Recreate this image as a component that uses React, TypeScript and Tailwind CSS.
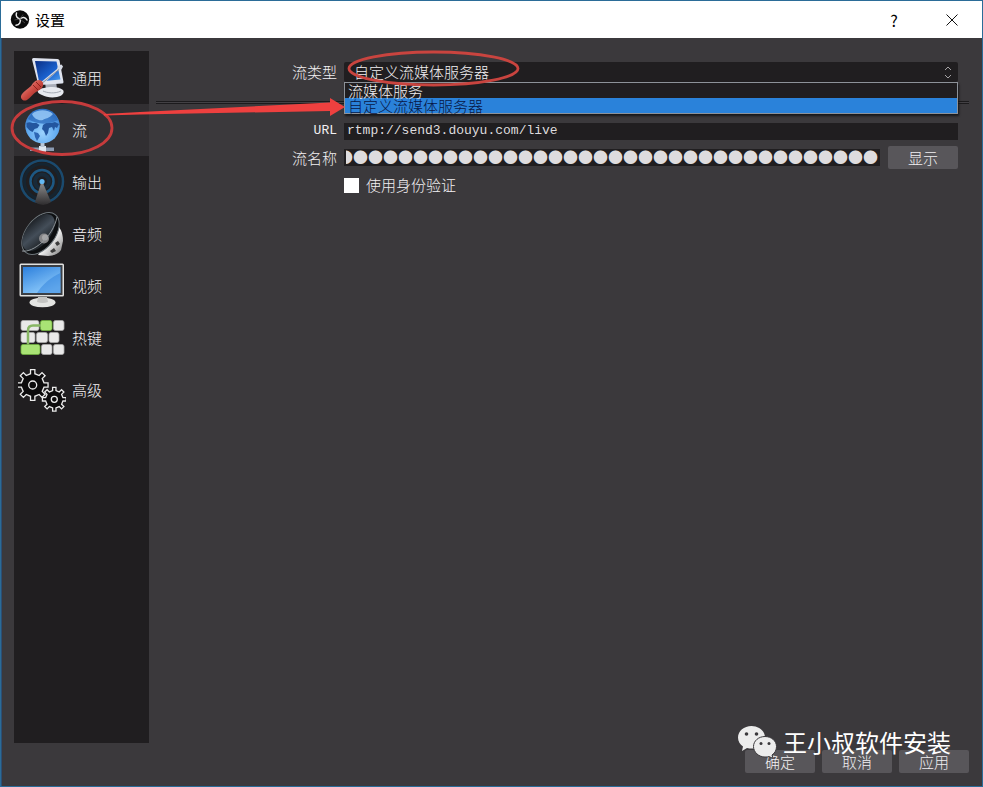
import clsx from "clsx";
import { type FC, type ReactNode, useState } from "react";

type Section = {
	id: string;
	label: string;
	icon: ReactNode;
};

const STREAM_TYPES = ["流媒体服务", "自定义流媒体服务器"];

const MASKED_KEY = "●".repeat(36);

const gearPath = (
	cx: number,
	cy: number,
	outer: number,
	inner: number,
	teeth: number,
) => {
	const step = (Math.PI * 2) / teeth;
	const points: string[] = [];
	for (let i = 0; i < teeth; i++) {
		const a = i * step - Math.PI / 2;
		const corners = [
			[inner, -0.24],
			[outer, -0.18],
			[outer, 0.18],
			[inner, 0.24],
		];
		for (const [r, offset] of corners) {
			const t = a + offset * step;
			points.push(
				`${(cx + r * Math.cos(t)).toFixed(2)} ${(cy + r * Math.sin(t)).toFixed(2)}`,
			);
		}
	}
	return `M${points.join("L")}Z`;
};

const GeneralIcon = () => (
	<svg viewBox="0 0 48 48" className="size-12 shrink-0" aria-hidden="true">
		<defs>
			<linearGradient id="general-screen" x1="0" y1="0" x2="1" y2="1">
				<stop offset="0" stopColor="#0b2f86" />
				<stop offset="0.6" stopColor="#1b62cf" />
				<stop offset="1" stopColor="#4fa0ee" />
			</linearGradient>
			<linearGradient id="general-handle" x1="0" y1="0" x2="1" y2="1">
				<stop offset="0" stopColor="#f3a39b" />
				<stop offset="0.5" stopColor="#cc4a42" />
				<stop offset="1" stopColor="#7c1713" />
			</linearGradient>
		</defs>
		<path d="M27 28l11-1 1 8-11 1z" fill="#a9adb8" />
		<path
			d="M20 36c5-3 20-5 25 0 2 3-1 6-6 7-6 1-11 0-15-2-3-1-5-3-4-5z"
			fill="#e6e8ee"
		/>
		<path d="M25 37c4 2 12 3 18 0" stroke="#a3a8b3" fill="none" />
		<path
			d="M14 5.500q0-1.500 1.500-1.500l24 1q1.500 0 2 1.500l4 21.500q0 1.500-1.500 1.500l-22 1.500q-1.500 0-2-1.500z"
			fill="#dfe3ee"
		/>
		<path d="M17 7l21.500 0.500 4 18-21.500 2z" fill="url(#general-screen)" />
		<path d="M22 29L39 15l1-3 3.500-1.500 1.500 2-1.500 3-3.500 1L24 31z" fill="#d5dae4" />
		<path d="M23 30L41 15.500" stroke="#737c91" strokeWidth="0.800" />
		<path
			d="M4 40c2-3 6-5 9-8 2-3 4-6 8-6 3 0 5 3 4 6-1 3-4 4-7 6-3 2-6 6-9 8-4 2-8-2-5-6z"
			fill="url(#general-handle)"
		/>
		<path d="M15 31l5 5M18 28l5 5" stroke="#7c1713" strokeWidth="0.800" />
	</svg>
);

const StreamIcon = () => (
	<svg viewBox="0 0 48 48" className="size-12 shrink-0" aria-hidden="true">
		<defs>
			<radialGradient id="stream-globe" cx="0.5" cy="0.7" r="0.7">
				<stop offset="0" stopColor="#9bd2fd" />
				<stop offset="0.6" stopColor="#62abf0" />
				<stop offset="1" stopColor="#2c6fc6" />
			</radialGradient>
		</defs>
		<path d="M12 41.500h24v3.500H12z" fill="#8b9bb2" />
		<path d="M21 40h7v6h-7z" fill="#dde5ee" />
		<path d="M22.500 37h4v4h-4z" fill="#b9c6d6" />
		<circle cx="24.500" cy="20" r="17.300" fill="url(#stream-globe)" />
		<path
			d="M8.500 17c2-1 4-1 6 0l4 0 3 2-2 3-3 1-2 3c-3-1-4-3-6-5z"
			fill="#23569f"
		/>
		<path d="M16 26l4 1 2 3-3 5-2-4z" fill="#2d66b4" />
		<path
			d="M25 19l3-2 5 0 4-1 4 2-2 4-2-1-1 4-2-4-3 1-1 5-2 3-2-5-2-2z"
			fill="#23569f"
		/>
		<path
			d="M10 13c4-8 12-10 18-9 6 1 10 5 12 10-9 5-21 5-30-1z"
			fill="#2a66b8"
			opacity="0.700"
		/>
		<path
			d="M14 8c5-5 16-5 21 0-4 5-8 4-10 6-4 1-9-1-11-6z"
			fill="#9fd0fb"
			opacity="0.800"
		/>
	</svg>
);

const OutputIcon = () => (
	<svg viewBox="0 0 48 48" className="size-12 shrink-0" aria-hidden="true">
		<defs>
			<linearGradient id="output-mast" x1="0" y1="0" x2="0" y2="1">
				<stop offset="0" stopColor="#8c8c8c" />
				<stop offset="1" stopColor="#2e2c2e" />
			</linearGradient>
		</defs>
		<g fill="none">
			<circle cx="24" cy="23.500" r="21" stroke="#1a4a6e" strokeWidth="2.500" />
			<circle cx="24" cy="23.500" r="17.500" stroke="#152430" strokeWidth="3" />
			<circle cx="24" cy="23.500" r="11.500" stroke="#1d5883" strokeWidth="2.500" />
			<circle cx="24" cy="23.500" r="7" stroke="#182a39" strokeWidth="4" />
		</g>
		<path d="M23 25h2l8 19q-8 6-16 0z" fill="url(#output-mast)" />
		<circle cx="24" cy="23.500" r="2.600" fill="#63b8f2" />
	</svg>
);

const AudioIcon = () => (
	<svg viewBox="0 0 48 48" className="size-12 shrink-0" aria-hidden="true">
		<defs>
			<linearGradient id="audio-cone" x1="0" y1="0" x2="1" y2="0.4">
				<stop offset="0" stopColor="#14171b" />
				<stop offset="0.6" stopColor="#444e59" />
				<stop offset="1" stopColor="#23282d" />
			</linearGradient>
			<linearGradient id="audio-body" x1="0" y1="0" x2="1" y2="1">
				<stop offset="0" stopColor="#6d6d6d" />
				<stop offset="0.5" stopColor="#f2f2f2" />
				<stop offset="1" stopColor="#777" />
			</linearGradient>
		</defs>
		<path
			d="M40 16c3 3 5 8 5 15l-2 9c-3 4-8 6-13 6l-10-1z"
			fill="url(#audio-body)"
		/>
		<path d="M37 33l3-2 2 3-3 2zM32 41l4-3 2 3-4 2z" fill="#3b3b3b" />
		<ellipse
			cx="22.500"
			cy="23.500"
			rx="14.500"
			ry="24"
			transform="rotate(38 22.500 23.500)"
			fill="#0d0f11"
			stroke="#6f777c"
			strokeWidth="1"
		/>
		<ellipse
			cx="20.500"
			cy="22.500"
			rx="12"
			ry="21.500"
			transform="rotate(38 20.500 22.500)"
			fill="url(#audio-cone)"
		/>
		<circle cx="26" cy="28.500" r="5" fill="#858587" />
		<circle cx="27" cy="27.500" r="3" fill="#a5a5a6" />
		<path
			d="M4 41c11 2 31-14 35-34"
			fill="none"
			stroke="#9ba2a6"
			strokeWidth="0.900"
		/>
	</svg>
);

const VideoIcon = () => (
	<svg viewBox="0 0 48 48" className="size-12 shrink-0" aria-hidden="true">
		<defs>
			<linearGradient id="video-screen" x1="0" y1="0" x2="0.6" y2="1">
				<stop offset="0" stopColor="#2c7fdc" />
				<stop offset="1" stopColor="#8ecbfb" />
			</linearGradient>
		</defs>
		<path d="M20 35h9v5h-9z" fill="#b5b5b5" />
		<ellipse cx="24.500" cy="40.500" rx="13" ry="4.800" fill="#e4e4e2" />
		<path d="M20 35h9l1 5q-5 2-11 0z" fill="#c4c4c2" />
		<rect x="1.500" y="1.500" width="44.500" height="33" rx="1.500" fill="#e0e0de" />
		<rect x="3" y="3" width="41.500" height="30" fill="#3b3f45" />
		<rect x="5" y="5" width="37.500" height="26" fill="url(#video-screen)" />
		<path d="M42.500 11v20H19c5-8 14-16 23.500-20z" fill="#2d80dc" opacity="0.500" />
	</svg>
);

const HotkeysIcon = () => (
	<svg viewBox="0 0 48 48" className="size-12 shrink-0" aria-hidden="true">
		<g fill="#e9e9e9" stroke="#a9a9a9" strokeWidth="0.800">
			<rect x="3" y="6.500" width="18" height="10" rx="2" />
			<rect x="35.500" y="6.500" width="10.500" height="10" rx="2" />
			<rect x="3" y="18.500" width="14" height="10" rx="2" />
			<rect x="18.500" y="18.500" width="11" height="10" rx="2" />
			<rect x="31" y="18.500" width="10" height="10" rx="2" />
			<rect x="23.500" y="30.500" width="10.500" height="10" rx="2" />
			<rect x="35.500" y="30.500" width="10.500" height="10" rx="2" />
		</g>
		<g fill="#a9e375" stroke="#6fae3d" strokeWidth="0.800">
			<rect x="22.500" y="6.500" width="11.500" height="10" rx="2" />
			<rect x="3" y="30.500" width="19" height="10" rx="2" />
		</g>
		<path
			d="M23 11.500h-8q-5 0-5 5v14"
			fill="none"
			stroke="#88b765"
			strokeWidth="2.500"
		/>
	</svg>
);

const AdvancedIcon = () => (
	<svg viewBox="0 0 48 48" className="size-12 shrink-0" aria-hidden="true">
		<g fill="#0c0b0c" stroke="#ececec" strokeWidth="1.300">
			<path d={gearPath(14.7, 19, 15.5, 11.5, 8)} />
			<circle cx="14.700" cy="19" r="4" />
			<path d={gearPath(36.3, 33.3, 12, 8.8, 8)} />
			<circle cx="36.300" cy="33.300" r="3" />
		</g>
	</svg>
);

const SECTIONS: Section[] = [
	{ id: "general", label: "通用", icon: <GeneralIcon /> },
	{ id: "stream", label: "流", icon: <StreamIcon /> },
	{ id: "output", label: "输出", icon: <OutputIcon /> },
	{ id: "audio", label: "音频", icon: <AudioIcon /> },
	{ id: "video", label: "视频", icon: <VideoIcon /> },
	{ id: "hotkeys", label: "热键", icon: <HotkeysIcon /> },
	{ id: "advanced", label: "高级", icon: <AdvancedIcon /> },
];

const ObsLogo = () => (
	<svg viewBox="0 0 20 20" className="size-5" aria-hidden="true">
		<circle cx="10" cy="9.500" r="9.200" fill="#0a0a0a" />
		<g fill="none" stroke="#e8e8e8" strokeWidth="1.500" strokeLinecap="round">
			<path d="M6.500 3c-1 3 0.500 5.500 3.500 6" />
			<path d="M10 9c2.500-2.500 5.500-2 7 1" />
			<path d="M10 9c1.200 3-0.500 5.800-4 6.200" />
		</g>
		<path
			d="M10 9L13 4.500M10 9l5 4M10 9l-5.500 1"
			stroke="#555"
			strokeWidth="0.700"
		/>
	</svg>
);

const TitleBar: FC = () => (
	<header className="flex items-center bg-white pl-[9px] h-[37px] font-normal text-black">
		<ObsLogo />
		<h1 className="flex-1 pl-[5px] text-[15px] leading-5">设置</h1>
		<button type="button" className="w-14 h-full text-base" aria-label="帮助">
			?
		</button>
		<button
			type="button"
			className="flex justify-center items-center w-[60px] h-full"
			aria-label="关闭"
		>
			<svg viewBox="0 0 12 12" className="size-3" aria-hidden="true">
				<path d="M0.500 0.500l11 11M11.500 0.500l-11 11" stroke="#111" />
			</svg>
		</button>
	</header>
);

const DialogButton: FC<{ children: ReactNode }> = ({ children }) => (
	<button
		type="button"
		className="bg-[#58565a] hover:bg-[#666468] rounded-xs w-[70px] h-[23px] text-[#f2f0f2] text-[15px] leading-5 shrink-0"
	>
		{children}
	</button>
);

const FieldRow: FC<{ label: string; htmlFor: string; children: ReactNode }> = ({
	label,
	htmlFor,
	children,
}) => (
	<div className="flex items-center">
		<label
			htmlFor={htmlFor}
			className={clsx(
				"pr-[7px] w-[188px] text-right leading-[18px] shrink-0",
				label === "URL" && "font-['Liberation_Mono'] font-normal text-[13px]",
			)}
		>
			{label}
		</label>
		{children}
	</div>
);

const StreamSettings: FC = () => {
	const [type, setType] = useState(STREAM_TYPES[1]);
	const [url, setUrl] = useState("rtmp://send3.douyu.com/live");
	const [auth, setAuth] = useState(false);

	return (
		<main className="flex-1 pt-[11px] min-w-0 text-[#f2f0f2] text-[15px]">
			<div className="pr-[11px]">
				<FieldRow label="流类型" htmlFor="stream-type">
					<div className="relative flex-1">
						<select
							id="stream-type"
							value={type}
							onChange={(e) => setType(e.target.value)}
							className="block bg-[#201e20] pl-2.5 rounded-xs w-full h-5 leading-5 appearance-none"
						>
							{STREAM_TYPES.map((item) => (
								<option key={item}>{item}</option>
							))}
						</select>
						<svg
							viewBox="0 0 8 12"
							className="top-1 right-1.5 absolute w-2 h-3 pointer-events-none"
							fill="none"
							stroke="#a5a3a5"
							aria-hidden="true"
						>
							<path d="M1 4l3-3 3 3M1 9l3 3 3-3" />
						</svg>
						<ul className="top-full z-10 absolute inset-x-0 bg-[#201e20] shadow-[1px_2px_2px_#17171a] border border-[#8d9299]">
							{STREAM_TYPES.map((item) => (
								<li key={item}>
									<button
										type="button"
										onClick={() => setType(item)}
										className={clsx(
											"block pl-[3px] w-full h-[15px] text-left leading-[14px]",
											item === type && "bg-[#2a82da] text-[#081746]",
										)}
									>
										{item}
									</button>
								</li>
							))}
						</ul>
					</div>
				</FieldRow>
			</div>
			<hr className="bg-[#434145] mt-[19px] mb-[18px] border-[#1c1b1d] border-y h-[3px]" />
			<div className="flex flex-col pr-[11px]">
				<FieldRow label="URL" htmlFor="stream-url">
					<input
						id="stream-url"
						type="text"
						value={url}
						onChange={(e) => setUrl(e.target.value)}
						className="flex-1 bg-[#201e20] px-[3px] min-w-0 h-[17px] font-['Liberation_Mono'] text-[#dedcde] text-[13px]"
					/>
				</FieldRow>
				<div className="mt-1.5">
					<FieldRow label="流名称" htmlFor="stream-key">
						<input
							id="stream-key"
							type="text"
							dir="rtl"
							readOnly
							value={MASKED_KEY}
							className="flex-1 bg-[#201e20] mr-2 px-0.5 min-w-0 h-[17px] text-[#dedcde]"
						/>
						<DialogButton>显示</DialogButton>
					</FieldRow>
				</div>
				<label className="flex items-center gap-[7px] mt-1.5 ml-[188px] leading-5">
					<input
						type="checkbox"
						checked={auth}
						onChange={(e) => setAuth(e.target.checked)}
						className="bg-white checked:bg-[#2a82da] size-[15px] appearance-none"
					/>
					使用身份验证
				</label>
			</div>
		</main>
	);
};

const Annotations: FC = () => (
	<svg
		className="top-0 left-0 z-20 absolute w-[560px] h-[180px] pointer-events-none"
		viewBox="1 1 560 180"
		fill="none"
		aria-hidden="true"
	>
		<ellipse
			cx="433.500"
			cy="68.500"
			rx="84.500"
			ry="16.500"
			stroke="#c9443f"
			strokeWidth="2.800"
		/>
		<ellipse
			cx="62"
			cy="128"
			rx="50"
			ry="26.500"
			stroke="#c63b3c"
			strokeWidth="2.800"
		/>
		<path
			d="M104 114l36-2 190-9.500V98l15 9-15 9v-5l-190 3.500-36 1z"
			fill="#ee403f"
		/>
	</svg>
);

const Watermark: FC = () => (
	<div className="right-[31px] bottom-[27px] z-20 absolute flex items-center gap-1.5 pointer-events-none">
		<svg viewBox="0 0 40 34" className="w-10 h-[34px]" aria-hidden="true">
			<path
				d="M14.500 1C7 1 1 6 1 12.500c0 4 2 7 5 9L5 26l5-3c10 2.500 18-3 18-10.500C28 6 22 1 14.500 1z"
				fill="#ececec"
			/>
			<path
				d="M28 11.500c-6.500 0-11.500 4.500-11.500 10S21.500 32 28 32c1.500 0 3 0 4-0.500l4 2-1-3.500c3-2 4.500-5 4.500-8.500 0-5.500-5-10-11.500-10z"
				fill="#ececec"
				stroke="#3b393c"
			/>
			<g fill="#3b393c">
				<circle cx="9.500" cy="9" r="1.800" />
				<circle cx="19.500" cy="9" r="1.800" />
				<circle cx="24" cy="18.500" r="1.500" />
				<circle cx="32" cy="18.500" r="1.500" />
			</g>
		</svg>
		<span className="font-normal text-2xl text-white">王小叔软件安装</span>
	</div>
);

const App: FC = () => {
	const [section, setSection] = useState("stream");

	return (
		<div className="relative flex flex-col bg-[#3b393c] border border-[#2b6c98] w-full min-h-screen font-['Noto_Sans_CJK_SC',sans-serif] font-light">
			<TitleBar />
			<div className="flex flex-col flex-1 gap-[7px] p-[13px] border-[#2b4f75] border-l-1 pl-3">
				<div className="flex flex-1 gap-[7px]">
					<nav className="flex flex-col bg-[#201e20] pt-px w-[135px] shrink-0">
						{SECTIONS.map(({ id, label, icon }) => (
							<button
								key={id}
								type="button"
								onClick={() => setSection(id)}
								className={clsx(
									"flex items-center gap-1.5 pl-1 h-[52px] text-[#f4f2f4] text-[15px]",
									id === section && "bg-[#312f32]",
								)}
							>
								{icon}
								{label}
							</button>
						))}
					</nav>
					<StreamSettings />
				</div>
				<footer className="flex justify-end gap-[7px]">
					<DialogButton>确定</DialogButton>
					<DialogButton>取消</DialogButton>
					<DialogButton>应用</DialogButton>
				</footer>
			</div>
			<Annotations />
			<Watermark />
		</div>
	);
};

export default App;
